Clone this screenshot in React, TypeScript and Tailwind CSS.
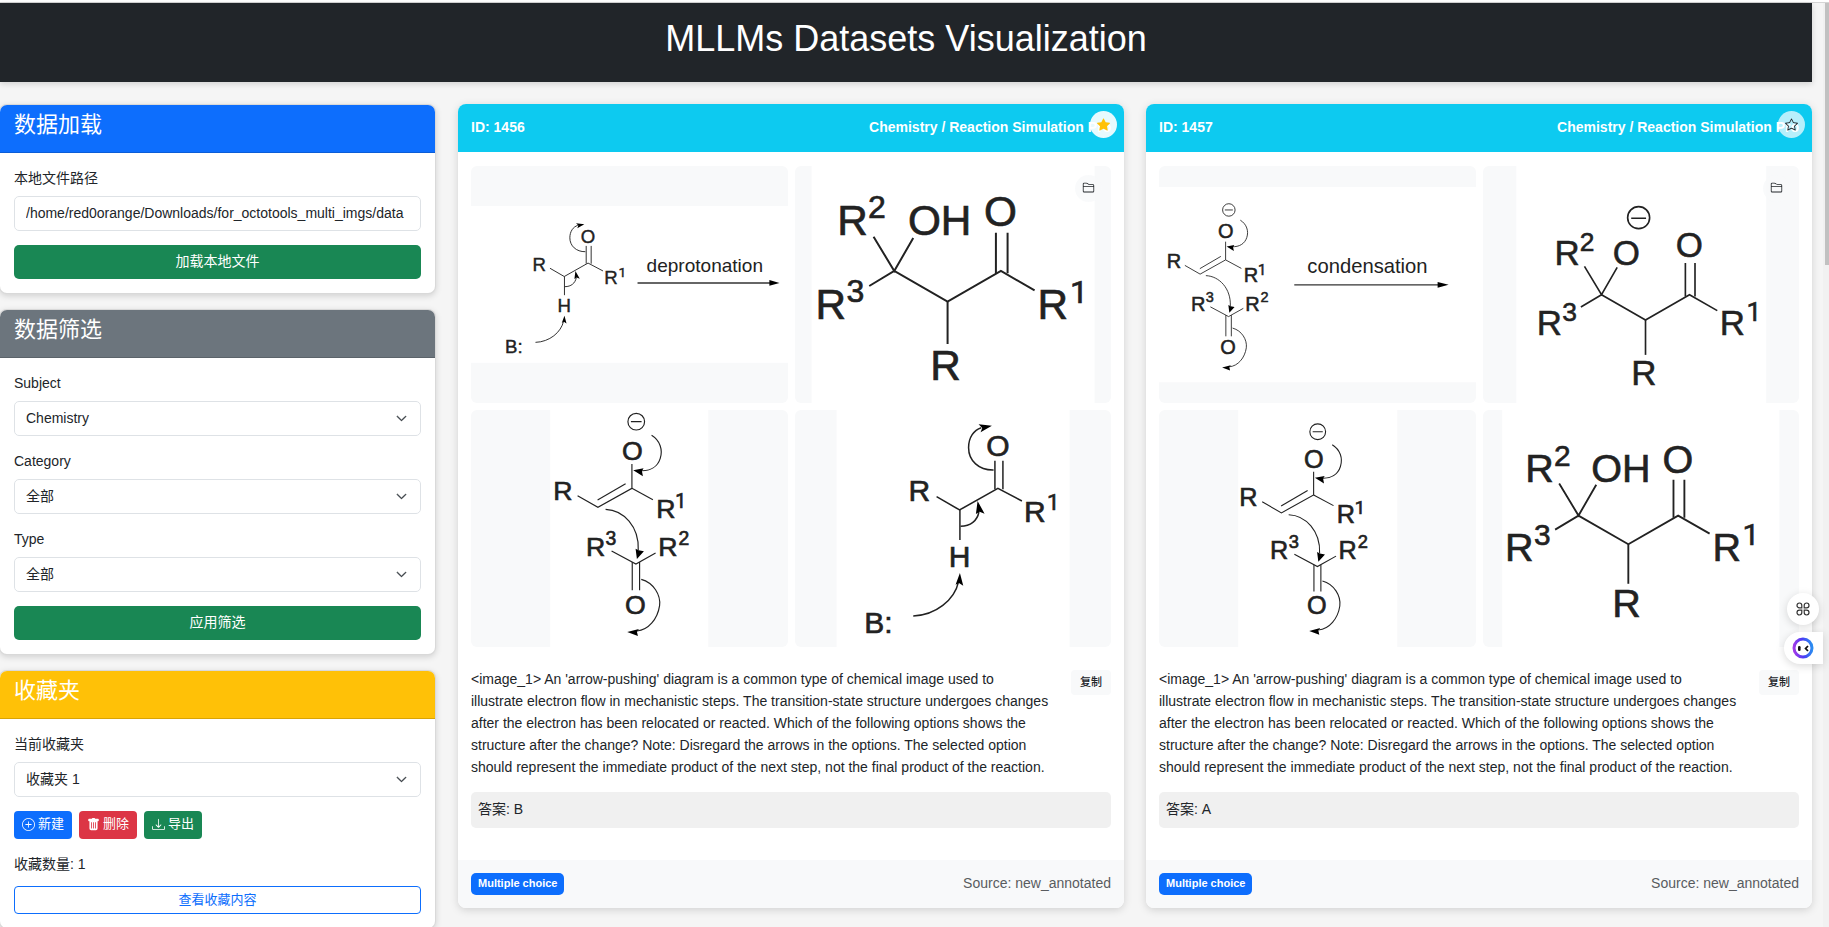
import React, { useState } from "react";
import {
  BsChevronDown,
  BsDownload,
  BsFolder2,
  BsPlusCircle,
  BsStar,
  BsStarFill,
  BsTrashFill,
} from "react-icons/bs";

const INK = "#222222";

type Box = { x: number; y: number; w: number; h: number };

function Figure({ label, view, paper, children }: { label: string; view: string; paper: Box; children: React.ReactNode }) {
  return (
    <div className="h-[237px] overflow-hidden rounded-md bg-[#f8f9fa]">
      <svg
        viewBox={view}
        className="block h-full w-full"
        role="img"
        aria-label={label}
        fontFamily='"Liberation Sans", Arial, sans-serif'
      >
        <rect x={paper.x} y={paper.y} width={paper.w} height={paper.h} fill="#ffffff" />
        {children}
      </svg>
    </div>
  );
}

function Deprotonation() {
  return (
    <g>
      <g fill="none" stroke={INK} strokeWidth="4.5">
        <path d="M438 290 L507 330 L622 265 L694 303" />
        <path d="M613 182 V268 M637 182 V268" />
        <path d="M508 330 V420" />
        <path d="M609 210 C565 211 534 182 534 143 C534 112 550 90 572 83" />
        <path d="M510 379 C540 379 560 362 565 336" />
        <path d="M368 648 C435 646 492 600 504 545" />
      </g>
      <g fill="#000000">
        <polygon points="564,73 604,77 570,97 575,84" />
        <polygon points="561,303 556,342 567,335 582,341" />
        <polygon points="508,519 495,554 505,549 518,557" />
      </g>
      <g fill={INK} stroke={INK} strokeWidth="2" fontSize="90">
        <text x="354" y="302">R</text>
        <text x="622" y="168" textAnchor="middle">O</text>
        <text x="507" y="500" textAnchor="middle">H</text>
        <text x="700" y="366">R</text>
        <text x="769" y="330" fontSize="66" fontFamily="Roboto, sans-serif">1</text>
        <text x="221" y="698">B:</text>
      </g>
    </g>
  );
}

function Enolate() {
  return (
    <g>
      <g fill="none" stroke={INK} strokeWidth="3.5">
        <circle cx="528" cy="65" r="25" />
        <path d="M512 65 H544" />
        <path d="M574 106 C600 122 608 150 600 175 C592 200 570 214 540 212" />
        <path d="M515 192 V265 L413 322 L352 287" />
        <path d="M496 251 L412 300" />
        <path d="M515 265 L578 299" />
        <path d="M436 328 C490 330 537 380 534 450" />
        <path d="M454 453 L527 492 L586 459" />
        <path d="M516 486 V571 M538 486 V571" />
        <path d="M543 538 C580 548 602 585 598 617 C592 657 565 690 530 693" />
      </g>
      <g fill="#000000">
        <polygon points="519,211 550,205 545,213 548,229" />
        <polygon points="530,477 526,446 535,451 551,454" />
        <polygon points="501,696 536,687 530,695 533,708" />
      </g>
      <g fill={INK} stroke={INK} strokeWidth="2" fontSize="80">
        <text x="516" y="179" textAnchor="middle">O</text>
        <text x="279" y="299">R</text>
        <text x="588" y="355">R</text>
        <text x="645" y="325" fontSize="58" fontFamily="Roboto, sans-serif">1</text>
        <text x="377" y="468">R</text>
        <text x="436" y="434" fontSize="58">3</text>
        <text x="594" y="468">R</text>
        <text x="655" y="434" fontSize="58">2</text>
        <text x="525" y="642" textAnchor="middle">O</text>
      </g>
    </g>
  );
}

function Aldol({ charged = false }: { charged?: boolean }) {
  return (
    <g>
      <g fill="none" stroke={INK} strokeWidth="6">
        <path d="M278 440 L340 543 L397 444" />
        <path d="M265 588 L340 543 L500 635 L660 543 L761 601" />
        <path d="M500 635 V762" />
        <path d="M645 428 V550 M680 428 V550" />
        {charged && <circle cx="475" cy="263" r="40" />}
        {charged && <path d="M448 265 H502" />}
      </g>
      <g fill={INK} stroke={INK} strokeWidth="2" fontSize="127">
        <text x="169" y="434">R</text>
        <text x="261" y="384" fontSize="96">2</text>
        <text x="381" y="434">{charged ? "O" : "OH"}</text>
        <text x="659" y="407" textAnchor="middle">O</text>
        <text x="104" y="688">R</text>
        <text x="197" y="637" fontSize="96">3</text>
        <text x="770" y="688">R</text>
        <text x="867" y="638" fontSize="96" fontFamily="Roboto, sans-serif">1</text>
        <text x="448" y="870">R</text>
      </g>
    </g>
  );
}

function FiguresFirst() {
  return (
    <>
      <Figure label="deprotonation step" view="58 -204 1526 1145" paper={{ x: 0, y: -11, w: 1700, h: 758 }}>
        <Deprotonation />
        <path d="M861 361 H1510" stroke="#333333" strokeWidth="7" />
        <polygon points="1498,347 1547,361 1498,374" fill="#000000" />
        <text x="1186" y="308" fontSize="92" textAnchor="middle" fill={INK}>deprotonation</text>
      </Figure>
      <Figure label="option A" view="43 228 948 711" paper={{ x: 92, y: 200, w: 849, h: 800 }}>
        <Aldol />
      </Figure>
      <Figure label="option B" view="33 30 948 711" paper={{ x: 270, y: 0, w: 474, h: 800 }}>
        <Enolate />
      </Figure>
      <Figure label="option C" view="14 30 948 711" paper={{ x: 138, y: 0, w: 699, h: 800 }}>
        <Deprotonation />
      </Figure>
    </>
  );
}

function FiguresSecond() {
  return (
    <>
      <Figure label="condensation step" view="249 -111 1266 949" paper={{ x: 200, y: -27, w: 1400, h: 782 }}>
        <Enolate />
        <path d="M790 365 H1375" stroke="#333333" strokeWidth="6" />
        <polygon points="1364,353 1408,365 1364,377" fill="#000000" />
        <text x="1083" y="318" fontSize="81" textAnchor="middle" fill={INK}>condensation</text>
      </Figure>
      <Figure label="option A" view="-90 75 1149 862" paper={{ x: 30, y: 0, w: 909, h: 1000 }}>
        <Aldol charged />
      </Figure>
      <Figure label="option B" view="26 -4 1001 751" paper={{ x: 276, y: -50, w: 504, h: 850 }}>
        <Enolate />
      </Figure>
      <Figure label="option C" view="34 204 1015 761" paper={{ x: 95, y: 150, w: 890, h: 850 }}>
        <Aldol />
      </Figure>
    </>
  );
}

function Panel({ title, head, children }: { title: string; head: string; children: React.ReactNode }) {
  return (
    <section className="overflow-hidden rounded-lg border border-black/15 bg-white shadow-[0_2px_6px_rgba(0,0,0,0.15)]">
      <h2 className={`h-12 border-b border-black/15 px-[14px] pt-1 text-[22px] leading-8 text-white ${head}`}>{title}</h2>
      <div className="p-[14px]">{children}</div>
    </section>
  );
}

function SelectField({ id, label, options }: { id: string; label: string; options: string[] }) {
  return (
    <div className="mb-[14px]">
      <label htmlFor={id} className="mb-[7px] block leading-[22px]">{label}</label>
      <div className="relative">
        <select
          id={id}
          className="h-[35px] w-full appearance-none rounded-[5px] border border-[#dee2e6] bg-white pr-8 pb-px pl-[11px] text-[#212529]"
        >
          {options.map((o) => (
            <option key={o}>{o}</option>
          ))}
        </select>
        <BsChevronDown className="pointer-events-none absolute top-3 right-[14px] size-[11px] text-[#343a40]" strokeWidth={1} />
      </div>
    </div>
  );
}

function SmallButton({ tone, icon, children }: { tone: string; icon: React.ReactNode; children: React.ReactNode }) {
  return (
    <button type="button" className={`flex h-7 w-[58px] items-center justify-center gap-[3px] rounded pb-[2px] text-[13px] text-white ${tone}`}>
      {icon}
      <span className="leading-5">{children}</span>
    </button>
  );
}

const QUESTION = [
  "<image_1> An 'arrow-pushing' diagram is a common type of chemical image used to",
  "illustrate electron flow in mechanistic steps. The transition-state structure undergoes changes",
  "after the electron has been relocated or reacted. Which of the following options shows the",
  "structure after the change? Note: Disregard the arrows in the options. The selected option",
  "should represent the immediate product of the next step, not the final product of the reaction.",
].join("\n");

function ItemCard({ id, answer, starred, children }: { id: number; answer: string; starred: boolean; children: React.ReactNode }) {
  const [fav, setFav] = useState(starred);
  return (
    <article className="relative overflow-hidden rounded-lg bg-white shadow-[0_2px_8px_rgba(0,0,0,0.15)]">
      <header className="flex h-12 items-center justify-between bg-[#0dcaf0] px-[13px] pb-[2px] font-bold text-white">
        <span>ID: {id}</span>
        <span>Chemistry / Reaction Simulation Pro</span>
      </header>
      <button
        type="button"
        aria-label="收藏"
        onClick={() => setFav(!fav)}
        className={`absolute top-[7px] right-[7px] flex size-[27px] items-center justify-center rounded-full pb-px ${
          fav ? "bg-white/90 text-[#ffc107]" : "bg-white/70 text-[#212529]"
        }`}
      >
        {fav ? <BsStarFill className="size-[13px]" /> : <BsStar className="size-[13px]" />}
      </button>
      <div className="px-[13px] pt-[14px] pb-8">
        <div className="relative grid grid-cols-2 gap-[7px]">
          {children}
          <button
            type="button"
            aria-label="文件夹"
            className="absolute top-[9px] right-[9px] flex size-[27px] items-center justify-center rounded-full bg-[#f8f9fa]/80 pb-[2px] text-[#212529]"
          >
            <BsFolder2 className="size-[13px]" />
          </button>
        </div>
        <div className="mt-[21px] flex items-start justify-between">
          <p className="min-w-0 leading-[22px] whitespace-pre-line">{QUESTION}</p>
          <button type="button" className="mt-[2px] h-[25px] w-10 shrink-0 rounded bg-[#f8f9fa] pb-px text-[11px] font-medium">
            复制
          </button>
        </div>
        <div className="mt-[14px] h-9 rounded-[5px] bg-[#f0f0f0] px-[7px] py-[6px] leading-[22px]">答案: {answer}</div>
      </div>
      <footer className="flex h-12 items-center justify-between bg-[#f8f9fa] px-[13px]">
        <span className="h-[22px] rounded-[5px] bg-[#0d6efd] px-[7px] text-[11px] leading-5 font-bold text-white">Multiple choice</span>
        <span className="pb-[2px] text-[#595c5f]">Source: new_annotated</span>
      </footer>
    </article>
  );
}

function AssistantFace() {
  return (
    <svg viewBox="0 0 22 22" className="size-[22px]" aria-hidden="true">
      <defs>
        <linearGradient id="ring" x1="0" y1="0.6" x2="1" y2="0.5">
          <stop offset="0" stopColor="#a13be8" />
          <stop offset="0.5" stopColor="#4a3cf5" />
          <stop offset="1" stopColor="#2b8cf0" />
        </linearGradient>
      </defs>
      <circle cx="11" cy="11" r="9" fill="#ffffff" stroke="url(#ring)" strokeWidth="3" />
      <rect x="6" y="9" width="2.6" height="5" rx="1.2" fill="#111111" />
      <path d="M16 9 L13.6 11.5 L16 14" fill="none" stroke="#111111" strokeWidth="1.8" />
    </svg>
  );
}

export default function App() {
  return (
    <div className='h-screen overflow-hidden bg-[#f5f5f5] font-["Liberation_Sans","Noto_Sans_CJK_SC",sans-serif] text-[14px] text-[#212529]'>
      <div className="h-[3px] border-b border-[#d5d5d5] bg-white" />
      <div className="pr-[17px]">
        <header className="flex h-[79px] items-start justify-center bg-[#212529] pt-[14px] shadow-[0_2px_6px_rgba(0,0,0,0.15)]">
          <h1 className="text-[36px] leading-[43px] text-white">MLLMs Datasets Visualization</h1>
        </header>
        <div className="mt-[22px] flex items-start gap-[22px]">
          <aside className="-ml-px flex w-[437px] shrink-0 flex-col gap-[15px]">
            <Panel title="数据加载" head="bg-[#0d6efd]">
              <label htmlFor="path" className="mb-[7px] block leading-[22px]">本地文件路径</label>
              <input
                id="path"
                type="text"
                defaultValue="/home/red0orange/Downloads/for_octotools_multi_imgs/data"
                className="mb-[14px] block h-[35px] w-full rounded-[5px] border border-[#dee2e6] bg-white px-[11px] pb-[2px]"
              />
              <button type="button" className="h-[34px] w-full rounded-[5px] bg-[#198754] pb-[2px] text-white">加载本地文件</button>
            </Panel>
            <Panel title="数据筛选" head="bg-[#6c757d]">
              <SelectField id="subject" label="Subject" options={["Chemistry"]} />
              <SelectField id="category" label="Category" options={["全部"]} />
              <SelectField id="type" label="Type" options={["全部"]} />
              <button type="button" className="h-[34px] w-full rounded-[5px] bg-[#198754] pb-[2px] text-white">应用筛选</button>
            </Panel>
            <Panel title="收藏夹" head="bg-[#ffc107]">
              <SelectField id="folder" label="当前收藏夹" options={["收藏夹 1"]} />
              <div className="flex gap-[7px]">
                <SmallButton tone="bg-[#0d6efd]" icon={<BsPlusCircle />}>新建</SmallButton>
                <SmallButton tone="bg-[#dc3545]" icon={<BsTrashFill />}>删除</SmallButton>
                <SmallButton tone="bg-[#198754]" icon={<BsDownload />}>导出</SmallButton>
              </div>
              <p className="mt-[14px] mb-[11px] leading-[22px]">收藏数量: 1</p>
              <button type="button" className="h-7 w-full rounded border border-[#0d6efd] text-[13px] leading-5 text-[#0d6efd]">查看收藏内容</button>
            </Panel>
          </aside>
          <main className="grid min-w-0 flex-1 grid-cols-2 gap-[22px]">
            <ItemCard id={1456} answer="B" starred>
              <FiguresFirst />
            </ItemCard>
            <ItemCard id={1457} answer="A" starred={false}>
              <FiguresSecond />
            </ItemCard>
          </main>
        </div>
      </div>

      <div className="fixed top-[3px] right-0 bottom-0 w-[6px] bg-[#f1f1f1]">
        <div className="ml-[2px] h-[262px] w-1 bg-[#c1c1c1]" />
      </div>
      <button
        type="button"
        aria-label="快捷指令"
        className="fixed top-[593px] right-[10px] flex size-8 items-center justify-center rounded-full bg-white shadow-[0_2px_8px_rgba(0,0,0,0.15)]"
      >
        <svg viewBox="0 0 14 14" className="size-[14px]" fill="none" stroke="#333333" strokeWidth="1.2" aria-hidden="true">
          <path d="M5.8 5.8 H3.4 A2.4 2.4 0 1 1 5.8 3.4 Z M8.2 5.8 V3.4 A2.4 2.4 0 1 1 10.6 5.8 Z M5.8 8.2 V10.6 A2.4 2.4 0 1 1 3.4 8.2 Z M8.2 8.2 H10.6 A2.4 2.4 0 1 1 8.2 10.6 Z" />
        </svg>
      </button>
      <button
        type="button"
        aria-label="助手"
        className="fixed top-[632px] right-[6px] flex h-8 w-[39px] items-center rounded-l-full bg-white pl-2 shadow-[0_2px_8px_rgba(0,0,0,0.15)]"
      >
        <AssistantFace />
      </button>
    </div>
  );
}
